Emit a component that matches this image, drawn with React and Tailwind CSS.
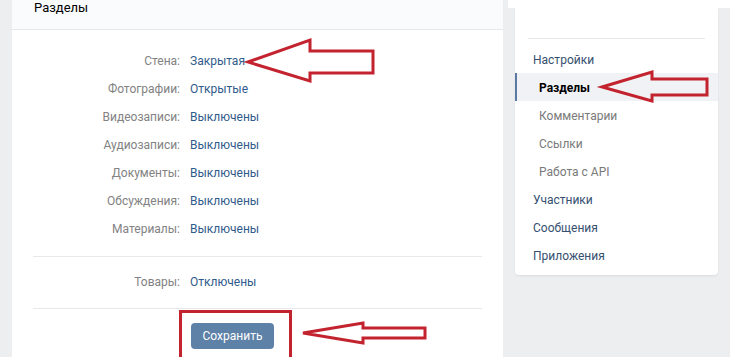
const font = { fontFamily: 'Roboto, "Open Sans", "DejaVu Sans", sans-serif' };

const sections = [
  ['Стена', 'Закрытая'],
  ['Фотографии', 'Открытые'],
  ['Видеозаписи', 'Выключены'],
  ['Аудиозаписи', 'Выключены'],
  ['Документы', 'Выключены'],
  ['Обсуждения', 'Выключены'],
  ['Материалы', 'Выключены'],
];

function Row({ label, value }) {
  return (
    <div className="flex h-[28px] items-center text-[12px]">
      <div className="w-[168px] text-right text-[#828282]">{label}:</div>
      <div className="ml-[10px] text-[#2f5b8a]">{value}</div>
    </div>
  );
}

function MenuItem({ children, sub, active }) {
  if (active) {
    return (
      <div className="flex h-[28px] items-center border-l-2 border-[#5a7aa3] bg-[#f0f2f5] pl-[22px] pt-[1px] text-[12px] font-bold text-black">
        {children}
      </div>
    );
  }
  return (
    <div
      className={
        sub
          ? 'flex h-[28px] items-center pl-[24px] pt-[1px] text-[12px] text-[#7a7a7a]'
          : 'flex h-[28px] items-center pl-[18px] pt-[1px] text-[12px] text-[#35506f]'
      }
    >
      {children}
    </div>
  );
}

function Arrows() {
  const red = '#c3232f';
  return (
    <svg className="pointer-events-none absolute left-0 top-0" width="730" height="357" viewBox="0 0 730 357">
      <g fill="none" stroke={red} strokeWidth="3" strokeLinejoin="miter">
        <polygon points="248,62 310,40 310,51 373,51 373,73 310,73 310,81" />
        <polygon points="602,87 652,72 652,79 707,79 707,95 652,95 652,101" />
        <polygon points="303,333 363,323 363,328 425,328 425,338 363,338 363,343" />
        <rect x="180.5" y="311.5" width="110" height="60" />
      </g>
    </svg>
  );
}

export default function App() {
  return (
    <div className="relative flex h-[357px] w-[730px] overflow-hidden bg-[#edeef0]" style={font}>
      <div className="ml-[12px] flex w-[491px] flex-col bg-white">
        <div className="h-[30px] border-b border-[#e7e8ec] bg-[#fafbfc] pl-[22px] text-[13px] leading-[15px] text-black">
          Разделы
        </div>
        <div className="pt-[17px]">
          {sections.map(([l, v]) => (
            <Row key={l} label={l} value={v} />
          ))}
        </div>
        <div className="mx-[21px] mt-[13px] border-t border-[#e7e8ec]" />
        <div className="pt-[11px]">
          <Row label="Товары" value="Отключены" />
        </div>
        <div className="mx-[21px] mt-[12px] border-t border-[#e7e8ec]" />
        <div className="pl-[179px] pt-[14px]">
          <button className="flex h-[26px] w-[83px] items-center justify-center rounded-[4px] bg-[#5e81a8] text-[12px] text-white">
            Сохранить
          </button>
        </div>
      </div>

      <div className="ml-[5px] flex flex-1 flex-col">
        <div className="h-[8px] bg-white" />
        <div className="ml-[7px] w-[203px] rounded-b-[4px] bg-white pb-[6px] shadow-[0_1px_2px_rgba(0,0,0,0.08)]">
          <div className="h-[30px]" />
          <div className="mx-[13px] border-t border-[#e7e8ec]" />
          <div className="pt-[6px]">
            <MenuItem>Настройки</MenuItem>
            <MenuItem active>Разделы</MenuItem>
            <MenuItem sub>Комментарии</MenuItem>
            <MenuItem sub>Ссылки</MenuItem>
            <MenuItem sub>Работа с API</MenuItem>
            <MenuItem>Участники</MenuItem>
            <MenuItem>Сообщения</MenuItem>
            <MenuItem>Приложения</MenuItem>
          </div>
        </div>
      </div>

      <Arrows />
    </div>
  );
}
